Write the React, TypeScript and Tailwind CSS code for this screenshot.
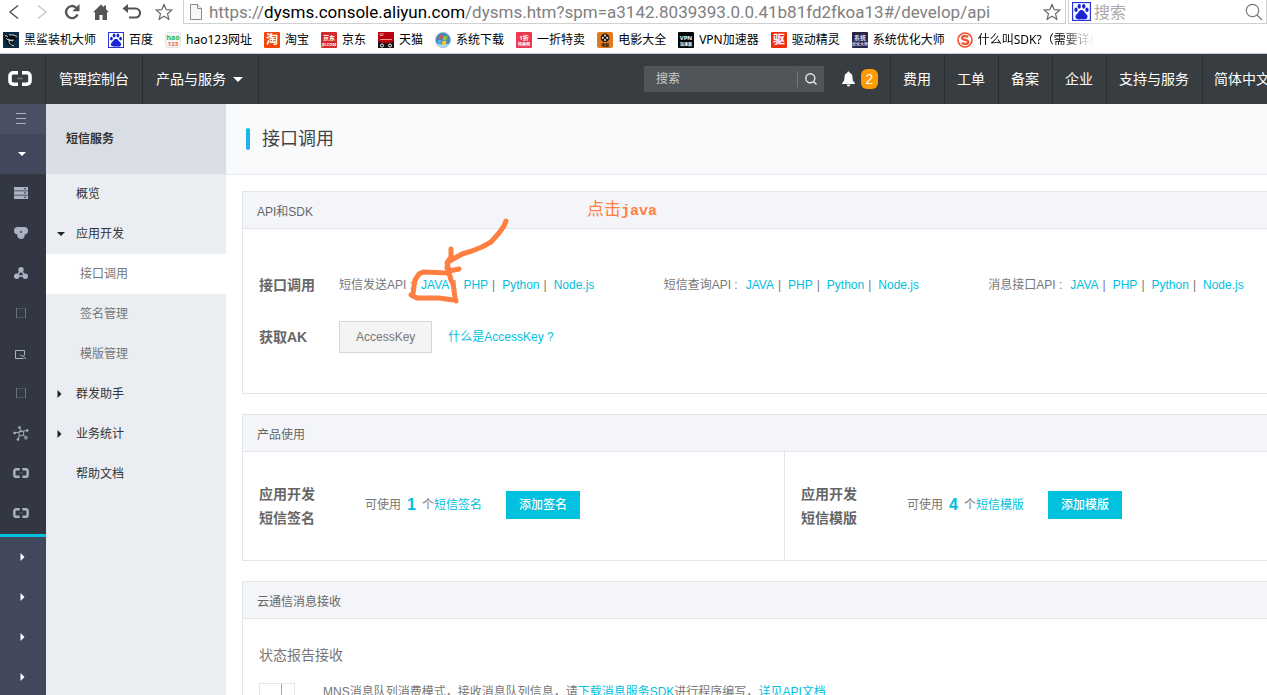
import type { ReactNode } from 'react';

import clsx from 'clsx';

const TILE = 'h-4 w-4 shrink-0';

interface TileProps {
  bg: string;
  fg?: string;
  top: string;
  bottom?: string;
}

// 書籤列的文字方塊圖示
function TextTile({ bg, fg = '#fff', top, bottom }: TileProps) {
  return (
    <svg viewBox="0 0 16 16" className={TILE} aria-hidden="true">
      <rect width="16" height="16" rx="1" fill={bg} />
      <text x="8" y={bottom ? 8 : 12} fontSize={bottom ? 6 : 12} fontWeight="700" textAnchor="middle" fill={fg}>
        {top}
      </text>
      {bottom && (
        <text x="8" y="14" fontSize="4" fontWeight="700" textAnchor="middle" fill={fg}>
          {bottom}
        </text>
      )}
    </svg>
  );
}

function PawIcon({ className }: { className: string }) {
  return (
    <svg viewBox="0 0 16 16" className={className} aria-hidden="true">
      <rect x=".5" y=".5" width="15" height="15" fill="#fff" stroke="#2a35d8" />
      <g fill="#1b26d0">
        <ellipse cx="3.4" cy="6.6" rx="1.4" ry="1.9" />
        <ellipse cx="6.1" cy="3.6" rx="1.4" ry="2" />
        <ellipse cx="9.9" cy="3.6" rx="1.4" ry="2" />
        <ellipse cx="12.6" cy="6.6" rx="1.4" ry="1.9" />
        <path d="M8 6.8c1.8 0 2.3 1.8 3.4 2.8 1.5 1.3 2 2.2 1.5 3.7-.5 1.6-2.8 1.5-4.9 1.3-2.1.2-4.4.3-4.9-1.3-.5-1.5 0-2.4 1.5-3.7C5.7 8.6 6.2 6.8 8 6.8z" />
      </g>
    </svg>
  );
}

const bookmarks: { name: string; icon: ReactNode; faded?: boolean }[] = [
  {
    name: '黑鲨装机大师',
    icon: (
      <svg viewBox="0 0 16 16" className={TILE} aria-hidden="true">
        <rect width="16" height="16" fill="#0b2c42" />
        <path d="M2 3l4 0c3-1 6 0 8 1l-3 1 3 2-3 1c1 2-1 3-3 2l2 3 2 1-5 0c-3-1-3-4-4-6L1 7z" fill="#04080c" />
        <path d="M2 3.5l3 1M6 3c3-.5 5 0 8 1.5M5 7c1 1 3 1.5 6 1M6 9c0 3 2 4 5 5M3 6l2 2 5 1" fill="none" stroke="#c9d6dd" />
      </svg>
    ),
  },
  { name: '百度', icon: <PawIcon className={TILE} /> },
  {
    name: 'hao123网址',
    icon: (
      <svg viewBox="0 0 16 16" className={TILE} aria-hidden="true">
        <rect x=".5" y=".5" width="15" height="15" rx="2" fill="#f4f4f4" stroke="#e4e4e4" />
        <text x="8" y="8" fontSize="7" fontWeight="700" textAnchor="middle" fill="#2fb52f">hao</text>
        <text x="8" y="14" fontSize="6" fontWeight="700" textAnchor="middle" fill="#f2622a">123</text>
      </svg>
    ),
  },
  { name: '淘宝', icon: <TextTile bg="#f4470b" top="淘" /> },
  { name: '京东', icon: <TextTile bg="#d3282f" top="京东" bottom="JD.COM" /> },
  {
    name: '天猫',
    icon: (
      <svg viewBox="0 0 16 16" className={TILE} aria-hidden="true">
        <rect width="16" height="16" fill="#b8000f" />
        <path d="M0 9c3 3 13 3 16 0v7H0z" fill="#1b1214" />
        <path d="M1 2h5M2 3.5h3M2 7.5h12" stroke="#f5b9b9" strokeWidth=".8" />
        <circle cx="4" cy="13.5" r="1.5" fill="none" stroke="#eee" />
        <circle cx="12" cy="13.5" r="1.5" fill="none" stroke="#eee" />
      </svg>
    ),
  },
  {
    name: '系统下载',
    icon: (
      <svg viewBox="0 0 16 16" className={TILE} aria-hidden="true">
        <circle cx="8" cy="8" r="7.5" fill="#3f88c5" stroke="#9fb8cc" />
        <path d="M1.5 11a7 7 0 0 0 13 0c-3 2-9 2-13 0z" fill="#a9dcef" />
        <path d="M4.2 3.5c1.2-.7 2.3-.7 3.5 0L7 7.4c-1.2-.6-2.3-.6-3.5 0z" fill="#f04e23" />
        <path d="M8.5 3.8c1.2.6 2.3.6 4 0l-.8 3.9c-1.4.6-2.6.6-3.9 0z" fill="#8cc63f" />
        <path d="M3.3 8.2c1.2-.7 2.3-.7 3.5 0L6 12c-1.2-.6-2.3-.6-3.5 0z" fill="#4fb3e8" />
        <path d="M7.6 8.5c1.2.6 2.3.6 4 0l-.8 3.9c-1.4.6-2.6.6-4 0z" fill="#fdc82f" />
      </svg>
    ),
  },
  { name: '一折特卖', icon: <TextTile bg="#e83a50" top="1折" bottom="特卖网" /> },
  {
    name: '电影大全',
    icon: (
      <svg viewBox="0 0 16 16" className={TILE} aria-hidden="true">
        <rect width="16" height="16" rx="2" fill="#e27a1f" />
        <circle cx="8" cy="5.8" r="4.3" fill="#21180f" />
        <g fill="#f0dfc8">
          <circle cx="8" cy="3.5" r="1.1" />
          <circle cx="5.8" cy="5.8" r="1.1" />
          <circle cx="10.2" cy="5.8" r="1.1" />
          <circle cx="8" cy="8" r="1.1" />
        </g>
        <text x="8" y="15" fontSize="4" fontWeight="700" textAnchor="middle" fill="#21180f">电影</text>
      </svg>
    ),
  },
  { name: 'VPN加速器', icon: <TextTile bg="#050505" top="VPN" bottom="加速器" /> },
  { name: '驱动精灵', icon: <TextTile bg="#ee2d0b" top="驱" /> },
  { name: '系统优化大师', icon: <TextTile bg="#2b2346" fg="#d9d5e6" top="系统" bottom="优化大师" /> },
  {
    name: '什么叫SDK?（需要详细',
    faded: true,
    icon: (
      <svg viewBox="0 0 16 16" className={TILE} aria-hidden="true">
        <circle cx="8" cy="8" r="7" fill="#fff" stroke="#f4502b" strokeWidth="1.6" />
        <path d="M11.3 4.8C9 3.7 5 3.7 5 6c0 2.5 6.3 1.3 6.3 3.9 0 2.3-4 2.4-6.5 1.2" fill="none" stroke="#f4502b" strokeWidth="2.2" />
      </svg>
    ),
  },
];

function StarIcon() {
  return (
    <svg viewBox="0 0 18 18" className="h-[18px] w-[18px]" fill="none" stroke="#6a6a6a" strokeWidth="1.2" aria-hidden="true">
      <path d="M9 1.5l2.2 5.1 5.5.5-4.2 3.6 1.3 5.5L9 13.3l-4.8 2.9 1.3-5.5L1.3 7.1l5.5-.5z" />
    </svg>
  );
}

function BrowserBar() {
  return (
    <div className="shrink-0 border-b border-[#c9ccd0] bg-white font-['Noto_Sans','Noto_Sans_CJK_SC',sans-serif] text-xs text-black">
      <div className="flex h-6 items-center">
        <div className="flex w-[183px] shrink-0 items-center gap-[13px] pl-[6px]">
          <button aria-label="后退">
            <svg viewBox="0 0 16 16" className="h-4 w-4" fill="none" stroke="#555" strokeWidth="1.5"><path d="M12 1.5L4 8l8 6.5" /></svg>
          </button>
          <button aria-label="前进">
            <svg viewBox="0 0 16 16" className="h-4 w-4" fill="none" stroke="#c8c8c8" strokeWidth="1.5"><path d="M3 1.5L11 8l-8 6.5" /></svg>
          </button>
          <button aria-label="刷新">
            <svg viewBox="0 0 16 16" className="h-4 w-4" fill="none" stroke="#555" strokeWidth="2.4">
              <path d="M13.5 10.5A6 6 0 1 1 12 3.6" />
              <path d="M15.5 0v7.2H8.3z" fill="#555" stroke="none" />
            </svg>
          </button>
          <button aria-label="主页">
            <svg viewBox="0 0 16 16" className="h-4 w-4" fill="#555"><path d="M8 .5l2.8 2.7V1.5H13v3.800L16 8.3h-2V16H9.5v-5h-3v5H2V8.3H0z" /></svg>
          </button>
          <button aria-label="撤销">
            <svg viewBox="0 0 20 16" className="h-4 w-5" fill="none" stroke="#555" strokeWidth="2.2">
              <path d="M3 4.5h10.5a4.3 4.3 0 0 1 0 9H7" />
              <path d="M6 0v9L.5 4.5z" fill="#555" stroke="none" />
            </svg>
          </button>
          <button aria-label="收藏"><StarIcon /></button>
        </div>
        <div className="flex h-6 min-w-0 flex-1 items-center border-b border-l border-r border-[#d0d0d0] pl-[6px] pr-1">
          <svg viewBox="0 0 12 16" className="mr-[7px] h-4 w-3 shrink-0" fill="#f7f7f7" stroke="#8c8c8c" aria-hidden="true">
            <path d="M.5.5h7l4 4v11H.5z" />
            <path d="M7.5.5v4h4" />
          </svg>
          <p className="flex-1 overflow-hidden whitespace-nowrap font-['Roboto',sans-serif] text-[17px] leading-6 text-[#808080]">
            https://<span className="text-black">dysms.console.aliyun.com</span>/dysms.htm?spm=a3142.8039393.0.0.41b81fd2fkoa13#/develop/api
          </p>
          <button aria-label="加入书签"><StarIcon /></button>
        </div>
        <div className="ml-[2px] flex h-6 w-[199px] shrink-0 items-center border-b border-l border-r border-[#d0d0d0] px-[3px]">
          <PawIcon className="mr-[3px] h-[19px] w-[19px] shrink-0" />
          <input
            aria-label="搜索引擎"
            placeholder="搜索"
            className="min-w-0 flex-1 text-base leading-6 outline-none placeholder:text-[#a9a9a9]"
          />
          <svg viewBox="0 0 18 18" className="h-[18px] w-[18px]" fill="none" stroke="#777" strokeWidth="1.2" aria-hidden="true">
            <circle cx="7.5" cy="7.5" r="6.2" />
            <path d="M12 12l5 5" />
          </svg>
        </div>
      </div>
      <nav className="flex h-[29px] items-center gap-3 overflow-hidden whitespace-nowrap pl-[3px] pt-[2px]">
        {bookmarks.map(({ name, icon, faded }) => (
          <a
            key={name}
            href="#"
            className={clsx(
              'flex items-center gap-[5px]',
              faded && 'w-[137px] overflow-hidden [mask-image:linear-gradient(to_right,black_75%,transparent)]',
            )}
          >
            {icon}
            {name}
          </a>
        ))}
      </nav>
    </div>
  );
}

// 阿里雲標誌
function CloudLogo({ className }: { className: string }) {
  return (
    <svg viewBox="0 0 24 15" className={className} fill="none" stroke="currentColor" aria-hidden="true">
      <path d="M10 1.8H5.2A3.2 3.2 0 0 0 2 5v5a3.2 3.2 0 0 0 3.2 3.2H10" strokeWidth="3.6" />
      <path d="M14 1.8h4.8A3.2 3.2 0 0 1 22 5v5a3.2 3.2 0 0 1-3.2 3.2H14" strokeWidth="3.6" />
      <path d="M9.5 7.5h5" strokeWidth="1.5" opacity=".35" />
    </svg>
  );
}

const topLinks = ['费用', '工单', '备案', '企业', '支持与服务'];

function TopNav() {
  return (
    <header className="flex h-[50px] shrink-0 items-stretch whitespace-nowrap bg-[#373d41] text-sm leading-5 text-white">
      <a href="#" aria-label="阿里云" className="flex w-[46px] items-center justify-center border-r border-[#2a2f32] pr-[5px] pb-[2px]">
        <CloudLogo className="h-[15px] w-6" />
      </a>
      <a href="#" className="flex items-center border-r border-[#2a2f32] px-[13px]">管理控制台</a>
      <button className="flex items-center gap-[7px] border-r border-[#2a2f32] pl-[13px] pr-[15px]">
        产品与服务
        <svg viewBox="0 0 10 5" className="h-[5px] w-[10px]" fill="currentColor" aria-hidden="true"><path d="M0 0h10L5 5z" /></svg>
      </button>
      <form className="my-auto ml-auto flex h-[26px] w-[180px] items-center bg-[#4f5558]">
        <input
          aria-label="搜索"
          placeholder="搜索"
          className="min-w-0 flex-1 pl-3 text-xs leading-4 outline-none placeholder:text-[#c8cacb]"
        />
        <button aria-label="提交搜索" type="button" className="flex h-4 w-[27px] items-center justify-center border-l border-[#73787b]">
          <svg viewBox="0 0 12 12" className="h-3 w-3" fill="none" stroke="#e4e5e6" strokeWidth="1.4"><circle cx="5.3" cy="5.3" r="4.5" /><path d="M8.5 8.5l3 3" /></svg>
        </button>
      </form>
      <a href="#" aria-label="消息" className="flex items-center gap-[6px] border-r border-[#2a2f32] pl-[18px] pr-3">
        <svg viewBox="0 0 14 16" className="h-4 w-[13px]" fill="currentColor" aria-hidden="true">
          <path d="M7 0c.8 0 1.2.5 1.2 1.2C10.5 1.8 11.3 3.8 11.3 6c0 3.3.8 4.8 2.7 6.5v.8H0v-.8C1.9 10.8 2.7 9.3 2.7 6c0-2.2.8-4.2 3.1-4.8C5.8.5 6.2 0 7 0zM5 14h4c0 1.2-.9 2-2 2s-2-.8-2-2z" />
        </svg>
        <span className="flex h-5 w-[17px] items-center justify-center rounded-md bg-[#ff9a00]">2</span>
      </a>
      {topLinks.map(label => (
        <a key={label} href="#" className="flex items-center border-r border-[#2a2f32] pl-3 pr-[13px]">{label}</a>
      ))}
      <button className="w-16 overflow-hidden pl-[11px] text-left">简体中文</button>
    </header>
  );
}

function BoxGlyph() {
  return (
    <svg viewBox="0 0 10 10" className="h-[10px] w-[10px]" fill="none" aria-hidden="true">
      <path d="M.5.5h9M.5 9.5h9" stroke="#4c525f" />
      <path d="M.5 0v10M9.5 0v10" stroke="#6b7280" />
    </svg>
  );
}

const railItems: { label: string; icon: ReactNode }[] = [
  {
    label: '云服务器',
    icon: (
      <svg viewBox="0 0 14 12" className="h-3 w-[14px]" aria-hidden="true">
        <path d="M0 0h14v3.5H0zM0 4.2h14v3.5H0zM0 8.4h14V12H0z" fill="currentColor" />
        <path d="M10 1.7h2M10 6h2M10 10.2h2" stroke="#333744" />
      </svg>
    ),
  },
  {
    label: '云数据库',
    icon: (
      <svg viewBox="0 0 14 12" className="h-3 w-[14px]" fill="currentColor" aria-hidden="true">
        <circle cx="3.7" cy="3.7" r="3.7" />
        <circle cx="10.3" cy="3.7" r="3.7" />
        <circle cx="7" cy="8.3" r="3.7" />
        <path d="M3.7 0h6.6v6H3.7z" />
        <circle cx="7" cy="5" r=".9" fill="#333744" />
      </svg>
    ),
  },
  {
    label: '负载均衡',
    icon: (
      <svg viewBox="0 0 14 12" className="h-3 w-[14px]" fill="currentColor" aria-hidden="true">
        <path d="M7 3L3 9h8z" fill="none" stroke="currentColor" strokeWidth="1.5" />
        <circle cx="7" cy="2.7" r="2.7" />
        <circle cx="2.7" cy="9.3" r="2.7" />
        <circle cx="11.3" cy="9.3" r="2.7" />
      </svg>
    ),
  },
  { label: '存储', icon: <BoxGlyph /> },
  {
    label: '日志',
    icon: (
      <svg viewBox="0 0 12 10" className="mt-1 h-[10px] w-3" fill="none" stroke="currentColor" aria-hidden="true">
        <path d="M9.5 5.5v-5h-9v8h8M5 4.5L6.5 6H9M8.5 6.5L11 9" />
      </svg>
    ),
  },
  { label: '网络', icon: <BoxGlyph /> },
  {
    label: '中间件',
    icon: (
      <svg viewBox="0 0 16 15" className="h-[15px] w-4" fill="currentColor" stroke="currentColor" aria-hidden="true">
        <path d="M6.5 1.5l1.5 4 6-1M8 5.5L2 7M6.5 9L5 13.5M10 8.5l3 3" fill="none" />
        <circle cx="8.3" cy="7.5" r="2.5" fill="none" />
        <circle cx="6.5" cy="1.5" r=".9" />
        <circle cx="14.2" cy="4.5" r=".9" />
        <circle cx="1.6" cy="7" r=".9" />
        <circle cx="5" cy="13.5" r=".9" />
        <circle cx="13" cy="11.8" r="1.3" fill="none" />
      </svg>
    ),
  },
  { label: '云通信', icon: <CloudLogo className="h-[10px] w-4" /> },
  { label: '短信', icon: <CloudLogo className="h-[10px] w-4" /> },
];

function IconRail() {
  return (
    <nav className="flex w-[46px] shrink-0 flex-col bg-[#42485b] pr-1 text-[#a9b4c0]">
      <button aria-label="收起导航" className="-mr-1 flex h-[30px] shrink-0 items-center justify-center bg-[#4a5064] pr-1">
        <svg viewBox="0 0 10 12" className="h-3 w-[10px]" stroke="currentColor" aria-hidden="true"><path d="M0 .5h10M0 5.5h10M0 10.5h10" /></svg>
      </button>
      <button aria-label="产品列表" className="flex h-10 shrink-0 items-center justify-center pl-[2px] text-white">
        <svg viewBox="0 0 8 4" className="h-1 w-2" fill="currentColor" aria-hidden="true"><path d="M0 0h8L4 4z" /></svg>
      </button>
      <div className="-mr-1 shrink-0 border-b-[3px] border-[#00c1de] bg-[#333744] pr-1">
        {railItems.map(({ label, icon }) => (
          <a key={label} href="#" aria-label={label} className="flex h-10 items-center justify-center pb-[2px]">{icon}</a>
        ))}
      </div>
      {['域名', '安全', '大数据', '更多'].map(label => (
        <button key={label} aria-label={label} className="flex h-10 shrink-0 items-center justify-center pl-[2px] text-white">
          <svg viewBox="0 0 4 8" className="h-2 w-[5px]" fill="currentColor" aria-hidden="true"><path d="M0 0l4 4-4 4z" /></svg>
        </button>
      ))}
    </nav>
  );
}

interface MenuItem {
  label: string;
  state?: 'open' | 'closed';
  child?: boolean;
  active?: boolean;
}

const menu: MenuItem[] = [
  { label: '概览' },
  { label: '应用开发', state: 'open' },
  { label: '接口调用', child: true, active: true },
  { label: '签名管理', child: true },
  { label: '模版管理', child: true },
  { label: '群发助手', state: 'closed' },
  { label: '业务统计', state: 'closed' },
  { label: '帮助文档' },
];

function SideMenu() {
  return (
    <aside className="w-[180px] shrink-0 bg-[#eaedf1] text-[#333]">
      <h2 className="flex h-[70px] items-center bg-[#d9dee4] pl-5 font-bold">短信服务</h2>
      {menu.map(({ label, state, child, active }) => (
        <a
          key={label}
          href="#"
          className={clsx('flex h-10 items-center pl-[11px]', child && 'text-[#777]', active && 'bg-white')}
        >
          <span className={clsx('shrink-0', child ? 'w-[23px]' : 'w-[19px]')}>
            {state === 'open' && (
              <svg viewBox="0 0 8 4" className="h-1 w-2" fill="#222" aria-hidden="true"><path d="M0 0h8L4 4z" /></svg>
            )}
            {state === 'closed' && (
              <svg viewBox="0 0 4 8" className="h-2 w-[5px]" fill="#222" aria-hidden="true"><path d="M0 0l4 4-4 4z" /></svg>
            )}
          </span>
          {label}
        </a>
      ))}
    </aside>
  );
}

function Panel({ title, children }: { title: string; children: ReactNode }) {
  return (
    <section className="border border-[#e1e6eb]">
      <h3 className="flex h-[37px] items-center border-b border-[#e1e6eb] bg-[#f4f5f9] px-[14px] pt-1 text-[#666]">{title}</h3>
      {children}
    </section>
  );
}

const languages = ['JAVA', 'PHP', 'Python', 'Node.js'];

function ApiLinks({ name }: { name: string }) {
  return (
    <div className="whitespace-nowrap">
      <span className="mr-2">{name} :</span>
      {languages.map((language, index) => (
        <span key={language}>
          {index > 0 && <span className="ml-1 mr-[7px]">|</span>}
          <a href="#" className="text-[#00c1de]">{language}</a>
        </span>
      ))}
    </div>
  );
}

function Quota({ kind, count }: { kind: string; count: number }) {
  return (
    <div className="flex h-[108px] items-center px-4">
      <h4 className="w-[106px] shrink-0 text-sm font-bold leading-6 text-[#666]">
        应用开发
        <br />
        短信{kind}
      </h4>
      <div className="flex items-center pb-[2px]">
        <p className="mr-6 flex items-center">
          可使用
          <b className="mx-[6px] text-base leading-5 text-[#00c1de]">{count}</b>
          个<a href="#" className="text-[#00c1de]">短信{kind}</a>
        </p>
        <button className="h-7 bg-[#00c1de] px-[13px] font-medium text-white">添加{kind}</button>
      </div>
    </div>
  );
}

// 手繪的圈選與箭頭
function Annotation() {
  return (
    <div className="pointer-events-none absolute left-[182px] top-[25px] flex items-start text-[#ff7f41]">
      <svg viewBox="408 217 104 90" className="mt-[17px] h-[90px] w-[104px]" fill="none" stroke="currentColor" strokeWidth="5" strokeLinecap="round" strokeLinejoin="round" aria-hidden="true">
        <path d="M506 221l-2 5-5 7-8 9-9 5-10 4-10 3-7 4-7 4-1 6" />
        <path d="M451 249l0 8-4 6 2 8 10-2" />
        <path d="M448 273l-25-1-4 2-4 6-1 6-1 8-2 1 6 3 22 0 14 2" />
        <path d="M449 273l2 7 2 4 1 6 1 8 1 3" />
      </svg>
      <p className="ml-[75px] text-[17px] leading-5">
        点击<span className="font-['Liberation_Mono',monospace] text-[15px] font-bold">java</span>
      </p>
    </div>
  );
}

export default function App() {
  return (
    <div className="flex h-screen flex-col overflow-hidden bg-white font-['Liberation_Sans','Noto_Sans_CJK_SC',sans-serif] text-xs leading-4 text-[#777]">
      <BrowserBar />
      <TopNav />
      <div className="flex min-h-0 min-w-[1344px] flex-1">
        <IconRail />
        <SideMenu />
        <main className="flex-1">
          <div className="flex h-[71px] items-center border-b border-[#e8ebef] bg-[#f9fafc] pl-5">
            <span className="mr-3 h-[22px] w-1 rounded-full bg-linear-to-b from-[#00c1de] to-[#2ea7f2]" />
            <h1 className="text-lg leading-[22px] text-[#444]">接口调用</h1>
          </div>
          <div className="relative flex flex-col gap-5 px-4 pt-4">
            <Panel title="API和SDK">
              <div className="flex h-[164px] flex-col gap-5 pl-4 pr-[14px] pt-10">
                <div className="flex h-8 items-center">
                  <h4 className="w-20 shrink-0 text-sm font-bold text-[#666]">接口调用</h4>
                  <div className="grid flex-1 grid-cols-3">
                    <ApiLinks name="短信发送API" />
                    <ApiLinks name="短信查询API" />
                    <ApiLinks name="消息接口API" />
                  </div>
                </div>
                <div className="flex h-8 items-center">
                  <h4 className="w-20 shrink-0 text-sm font-bold text-[#666]">获取AK</h4>
                  <button className="mr-4 h-8 border border-[#d5d8db] bg-[#f4f4f4] px-4">AccessKey</button>
                  <a href="#" className="text-[#00c1de]">什么是AccessKey ?</a>
                </div>
              </div>
            </Panel>
            <Panel title="产品使用">
              <div className="grid grid-cols-2 divide-x divide-[#e1e6eb]">
                <Quota kind="签名" count={1} />
                <Quota kind="模版" count={4} />
              </div>
            </Panel>
            <Panel title="云通信消息接收">
              <div className="px-4 pt-[26px]">
                <h4 className="text-sm leading-5">状态报告接收</h4>
                <div className="mt-[18px] flex gap-7">
                  <div className="flex h-9 w-9 justify-center border border-[#e1e6eb] pl-2">
                    <span className="h-full w-px bg-[#aaa]" />
                  </div>
                  <p className="leading-[18px]">
                    MNS消息队列消费模式，接收消息队列信息，请<a href="#" className="text-[#00c1de]">下载消息服务SDK</a>进行程序编写，
                    <a href="#" className="text-[#00c1de]">详见API文档</a>
                  </p>
                </div>
              </div>
            </Panel>
            <Annotation />
          </div>
        </main>
      </div>
    </div>
  );
}
